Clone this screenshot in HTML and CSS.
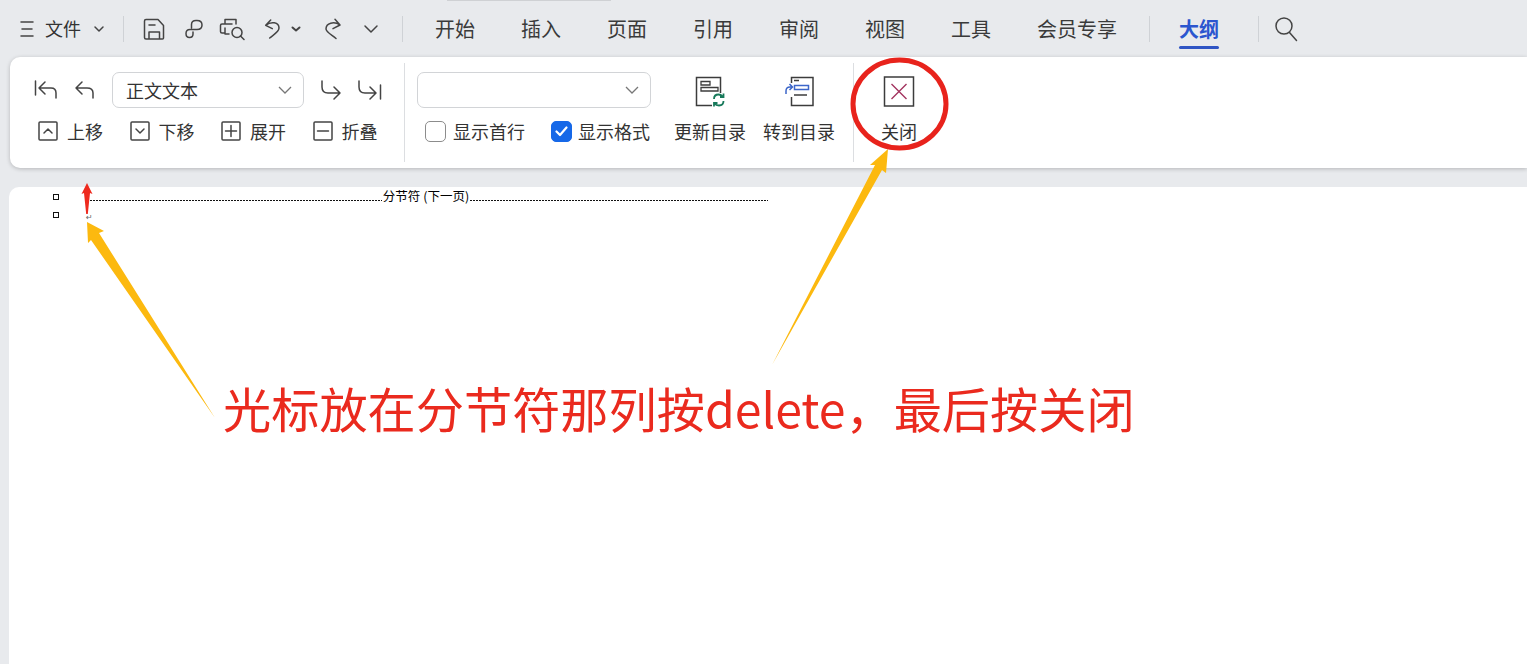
FILE: index.html
```html
<!DOCTYPE html>
<html lang="zh">
<head>
<meta charset="utf-8">
<title>大纲</title>
<link rel="stylesheet" href="styles.css">
</head>
<body>
<div class="app">
  <div class="top-notch"></div>
  <header class="topbar">
    <svg class="ico m-menu" width="14" height="20" viewBox="0 0 14 20"><path d="M1 3h12M2 10h10M1 17h12"/></svg>
    <span class="m-file">文件</span>
    <svg class="ico m-chev" width="12" height="8" viewBox="0 0 12 8"><path d="M2 2l4 4 4-4"/></svg>
    <span class="vsep m-sep1"></span>
    <svg class="ico m-save" width="22" height="22" viewBox="0 0 22 22"><path d="M3.500 1.500H15l5.500 6V20q0 1-1 1H3q-1.500 0-1.500-1.500V3q0-1.500 1.500-1.500zM6 7h6M6 21v-7h10.500v7"/></svg>
    <svg class="ico m-link" width="20" height="22" viewBox="0 0 20 22"><path d="M7.500 10V6.500q0-4 4.500-4h1q5 0 5 4.500t-5 4.500H6q-4 0-4 4t3.500 4 3.500-3.500V14"/></svg>
    <svg class="ico m-prev" width="26" height="24" viewBox="0 0 26 24"><path d="M6 7V2.500h11V7M13 7H3q-1.500 0-1.500 1.500v6q0 1.500 1.500 1.500h3M6 11v6h4"/><circle cx="18" cy="15.500" r="5"/><path d="M21.500 19l3.500 3.500"/></svg>
    <svg class="ico m-undo" width="18" height="22" viewBox="0 0 18 22"><path d="M6.700 2L1.700 7.300l6.600 3.400M1.700 7.300C7 3 15 4 15 10c0 4-6 7-9.300 10"/></svg>
    <svg class="ico m-caret" width="10" height="6" viewBox="0 0 10 6"><path class="bold" d="M1.500 1.500L5 4.500l3.500-3"/></svg>
    <svg class="ico m-redo" width="18" height="22" viewBox="0 0 18 22"><path d="M10 1.300L15 7l-7 3.700M15 7C9 3 1 5 1 11c0 3 6 6 10 9.500"/></svg>
    <svg class="ico m-more" width="16" height="10" viewBox="0 0 16 10"><path d="M2 2l6 6 6-6"/></svg>
    <span class="vsep m-sep2"></span>
    <nav class="tabs">
      <span>开始</span><span>插入</span><span>页面</span><span>引用</span><span>审阅</span><span>视图</span><span>工具</span><span>会员专享</span>
    </nav>
    <span class="vsep m-sep3"></span>
    <span class="tab-active">大纲</span>
    <span class="vsep m-sep4"></span>
    <svg class="ico m-search" width="24" height="26" viewBox="0 0 24 26"><circle cx="10" cy="10" r="8"/><path d="M15.500 16.500l7 8"/></svg>
  </header>

  <section class="ribbon">
    <div class="group group-levels">
      <div class="row-top">
        <svg class="ico i-first" width="24" height="20" viewBox="0 0 24 20"><path d="M1.500 1v14M11 2L5 8l6 6M5 8h12q5 0 5 5v5"/></svg>
        <svg class="ico i-prev" width="20" height="20" viewBox="0 0 20 20"><path d="M8 2L2 8l6 6M2 8h11q6 0 6 5v5"/></svg>
        <div class="select select-level"><span>正文文本</span><svg class="chev" width="14" height="8" viewBox="0 0 14 8"><path d="M1 1l6 6 6-6"/></svg></div>
        <svg class="ico i-next" width="20" height="20" viewBox="0 0 20 20"><path d="M1 1v6q0 6 6 6h12M13 7l6 6-6 6"/></svg>
        <svg class="ico i-last" width="24" height="20" viewBox="0 0 24 20"><path d="M1 1v6q0 6 6 6h10M12 7l6 6-6 6M22.500 5v14"/></svg>
      </div>
      <div class="row-bottom">
        <div class="cmd"><svg class="ico" width="20" height="20" viewBox="0 0 20 20"><rect x="1" y="1" width="18" height="18" rx="1"/><path d="M6 12l4-4 4 4"/></svg><span>上移</span></div>
        <div class="cmd"><svg class="ico" width="20" height="20" viewBox="0 0 20 20"><rect x="1" y="1" width="18" height="18" rx="1"/><path d="M6 8l4 4 4-4"/></svg><span>下移</span></div>
        <div class="cmd"><svg class="ico" width="20" height="20" viewBox="0 0 20 20"><rect x="1" y="1" width="18" height="18" rx="1"/><path d="M4.500 10h11M10 4.500v11"/></svg><span>展开</span></div>
        <div class="cmd"><svg class="ico" width="20" height="20" viewBox="0 0 20 20"><rect x="1" y="1" width="18" height="18" rx="1"/><path d="M4.500 10h11"/></svg><span>折叠</span></div>
      </div>
    </div>

    <div class="group group-toc">
      <div class="toc-col">
        <div class="select select-toc"><svg class="chev" width="14" height="8" viewBox="0 0 14 8"><path d="M1 1l6 6 6-6"/></svg></div>
        <div class="checks">
          <div class="check"><span class="box"></span><span>显示首行</span></div>
          <div class="check check-second"><span class="box on"><svg width="13" height="11" viewBox="0 0 13 11"><path d="M1.500 5.500l3.500 3.500 6.500-7.500"/></svg></span><span>显示格式</span></div>
        </div>
      </div>
      <div class="btn btn-update">
        <div class="btn-icon">
          <svg width="30" height="32" viewBox="0 0 30 32">
            <path class="dark" d="M25.500 17V1.500h-24v28H17"/>
            <path class="dark thin" d="M6 5.500h9v3.500H6zM6 11.500h17v3.500H6z"/>
            <path class="green" d="M19 23q0-4.500 4.500-4.500 2.500 0 4 2M28.500 25q0 4.500-4.500 4.500-3 0-4.500-2M28.500 17.500v3.500H25M19 30.500V27h3.500"/>
          </svg>
        </div>
        <span>更新目录</span>
      </div>
      <div class="btn">
        <div class="btn-icon">
          <svg width="30" height="32" viewBox="0 0 30 32">
            <path class="dark" d="M7.500 7V1.500h21.500v28H7.500V21"/>
            <path class="dark thin" d="M10 4.500h5M10 19h13"/>
            <path class="blue" d="M10.500 9.500h14v4h-14z"/>
            <path class="blue" d="M2 18v-3q0-4 4-4h2.500M5.500 8l3 3-3 3"/>
          </svg>
        </div>
        <span>转到目录</span>
      </div>
    </div>

    <div class="group group-close">
      <div class="btn">
        <div class="btn-icon">
          <svg width="32" height="32" viewBox="0 0 32 32">
            <rect class="dark" x="1.500" y="1" width="29" height="29"/>
            <path class="cross" d="M8.500 8l15 15M23.500 8l-15 15"/>
          </svg>
        </div>
        <span>关闭</span>
      </div>
    </div>
  </section>

  <main class="doc">
    <div class="doc-row">
      <span class="handle"></span>
      <span class="dots dots-a"></span>
      <span class="break-label">分节符 (下一页)</span>
      <span class="dots dots-b"></span>
    </div>
    <div class="doc-row">
      <span class="handle"></span>
      <span class="para-mark">↵</span>
    </div>
  </main>

  <svg class="marks" width="1527" height="664" viewBox="0 0 1527 664">
    <polygon class="amber" points="772,365 875,165 870,165 888,149 886,173 882,170"/>
    <polygon class="amber" points="215,418 99,233 104,231 87,222 88,243 91,240"/>
    <polygon class="red" points="87,183 92.500,194 90,193 87.800,214 86.200,214 84,193 81.500,194"/>
    <ellipse class="ring" cx="899.500" cy="104" rx="46.500" ry="44"/>
  </svg>
  <p class="note">光标放在分节符那列按delete，最后按关闭</p>
</div>
</body>
</html>
```

FILE: styles.css
```css
* { box-sizing: border-box; }
html, body { margin: 0; padding: 0; }
body {
  background: #e8eaed;
  color: #333;
  font-family: "Noto Sans CJK SC", "Noto Sans", sans-serif;
  font-size: 18px;
  overflow: hidden;
}
.app { position: relative; width: 1527px; height: 664px; overflow: hidden; }
.top-notch {
  position: absolute; left: 447px; top: 0; width: 164px; height: 1px;
  background: #cfd1d4;
}
svg { display: block; flex: none; }
.ico path, .ico rect, .ico circle {
  fill: none; stroke: #444; stroke-width: 1.500; stroke-linecap: round; stroke-linejoin: round;
}
.ico path.bold { stroke-width: 2; }

/* top bar */
.topbar { display: flex; align-items: center; height: 57px; padding-left: 20px; }
.topbar > span { line-height: 26px; }
.m-file { margin: 0 0 2px 11px; }
.m-chev { margin-left: 12px; }
.vsep { width: 1px; height: 26px; background: #cfd2d6; flex: none; }
.m-sep1 { margin-left: 18px; }
.m-save { margin-left: 19px; }
.m-link { margin-left: 19px; }
.m-prev { margin-left: 15px; }
.m-undo { margin-left: 19px; }
.m-caret { margin-left: 9px; }
.m-redo { margin-left: 24px; }
.m-more { margin-left: 20px; }
.m-sep2 { margin-left: 23px; }
.tabs { display: flex; gap: 46px; margin-left: 32px; font-size: 20px; line-height: 28px; color: #3a3a3a; }
.m-sep3 { margin-left: 32px; }
.tab-active {
  margin-left: 29px; font-size: 20px; font-weight: 700; color: #2b56cf;
  position: relative;
}
.tab-active::after {
  content: ""; position: absolute; left: 0; right: 0; top: 30px; height: 3px;
  border-radius: 2px; background: #2f55c4;
}
.m-sep4 { margin-left: 39px; }
.m-search { margin-left: 15px; }

/* ribbon */
.ribbon {
  display: flex; height: 111px; margin-left: 10px; padding: 6px 0;
  background: #fff; border-radius: 10px 0 0 10px;
  box-shadow: 0 1px 4px rgba(0, 0, 0, .22);
}
.group { padding-top: 9px; border-right: 1px solid #dcdee1; flex: none; }
.group-levels { width: 395px; }
.row-top { display: flex; align-items: center; height: 36px; padding-left: 24px; }
.i-prev { margin-left: 16px; }
.select {
  display: flex; align-items: center; justify-content: space-between;
  height: 36px; padding: 0 11px 0 13px;
  border: 1px solid #d2d4d7; border-radius: 7px; background: #fff;
}
.select-level { width: 192px; margin-left: 18px; }
.select-toc { width: 234px; justify-content: flex-end; }
.chev path { fill: none; stroke: #777; stroke-width: 1.300; }
.i-next { margin-left: 17px; }
.i-last { margin-left: 17px; }
.row-bottom { display: flex; height: 26px; margin-top: 10px; padding-left: 28px; }
.cmd { display: flex; align-items: center; gap: 9px; width: 92.500px; white-space: nowrap; }

.group-toc { display: flex; width: 449px; padding-left: 12px; }
.toc-col { width: 234px; margin-right: 23px; }
.checks { display: flex; height: 26px; margin-top: 10px; padding-left: 8px; }
.check { display: flex; align-items: center; gap: 7px; white-space: nowrap; }
.check-second { margin-left: 26px; gap: 6px; }
.box {
  display: flex; align-items: center; justify-content: center;
  width: 21px; height: 21px; border: 1.500px solid #8c8c8c; border-radius: 5px; background: #fff;
}
.box.on { background: #1668e8; border-color: #1668e8; }
.box path { fill: none; stroke: #fff; stroke-width: 2.200; stroke-linecap: round; stroke-linejoin: round; }

.btn { display: flex; flex-direction: column; align-items: center; width: 72px; white-space: nowrap; }
.btn-update { margin-right: 17px; }
.btn > span { height: 26px; line-height: 26px; margin-top: 10px; }
.btn-icon { display: flex; align-items: flex-end; justify-content: center; height: 36px; }
.dark { fill: none; stroke: #3c3c3c; stroke-width: 1.500; }
.dark.thin { stroke-width: 1.300; }
.green { fill: none; stroke: #17795a; stroke-width: 1.800; }
.blue { fill: none; stroke: #3c66c9; stroke-width: 1.500; }
.cross { fill: none; stroke: #a3345f; stroke-width: 1.400; }
.group-close { border-right: 0; padding-left: 27px; width: 120px; }
.group-close .btn { width: 36px; }

/* document */
.doc {
  height: 477px; margin: 19px 0 0 9px; padding-left: 44px;
  background: #fff; border-radius: 10px 0 0 0;
}
.doc-row { display: flex; height: 18px; align-items: center; color: #000; }
.handle { width: 6px; height: 6px; border: 1.500px solid #111; flex: none; margin-top: 1px; }
.dots {
  align-self: flex-start; height: 1px; margin-top: 13px; flex: none;
  background: repeating-linear-gradient(90deg, #111 0 2px, transparent 2px 3px);
}
.dots-a { width: 292px; margin-left: 31px; }
.dots-b { width: 298px; }
.break-label { width: 88px; font-size: 12.500px; line-height: 14px; text-align: center; white-space: nowrap; }
.para-mark { margin: 8px 0 0 27px; font-size: 8px; line-height: 10px; color: #666; font-family: "DejaVu Sans", sans-serif; }

/* annotations */
.marks { position: absolute; left: 0; top: 0; pointer-events: none; }
.amber { fill: #fcb90f; }
.red { fill: #ee2a1e; }
.ring { fill: none; stroke: #e8231c; stroke-width: 5; }
.note {
  position: absolute; left: 223px; top: 372px; margin: 0;
  font-size: 48.200px; line-height: 70px; color: #ea2a1e; white-space: nowrap;
}
```
